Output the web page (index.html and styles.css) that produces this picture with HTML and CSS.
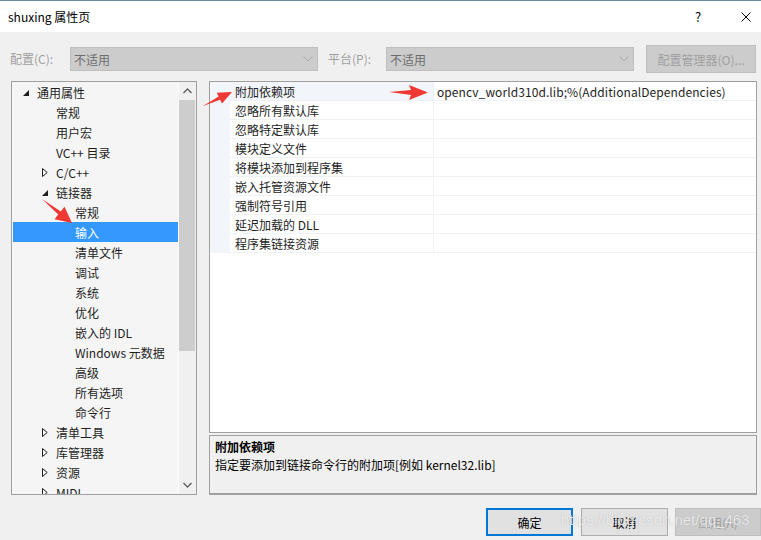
FILE: index.html
```html
<!DOCTYPE html>
<html lang="zh-CN">
<head>
<meta charset="utf-8">
<title>shuxing 属性页</title>
<link rel="stylesheet" href="styles.css">
</head>
<body>
<div class="titlebar">
  <span class="title">shuxing 属性页</span>
  <span class="help">?</span>
  <span class="close"><svg width="10" height="10" viewBox="0 0 10 10"><path d="M0.5 0.5L9.5 9.5M9.5 0.5L0.5 9.5" stroke="#000" stroke-width="1" fill="none"/></svg></span>
</div>

<div class="toolbar">
  <span class="lbl lbl-cfg">配置(C):</span>
  <div class="combo"><span>不适用</span><svg class="chev" width="10" height="6" viewBox="0 0 10 6"><path d="M0.5 0.5L5 5L9.5 0.5" stroke="#a8a8a8" fill="none"/></svg></div>
  <span class="lbl lbl-plat">平台(P):</span>
  <div class="combo"><span>不适用</span><svg class="chev" width="10" height="6" viewBox="0 0 10 6"><path d="M0.5 0.5L5 5L9.5 0.5" stroke="#a8a8a8" fill="none"/></svg></div>
  <div class="cfgbtn">配置管理器(O)...</div>
</div>

<div class="main">
  <div class="tree">
    <div class="tree-list">
      <div class="trow l0"><span class="tw"><svg width="6" height="6" viewBox="0 0 6 6"><path d="M6 0L6 6L0 6Z" fill="#1e1e1e"/></svg></span>通用属性</div>
      <div class="trow l1"><span class="tw"></span>常规</div>
      <div class="trow l1"><span class="tw"></span>用户宏</div>
      <div class="trow l1"><span class="tw"></span>VC++ 目录</div>
      <div class="trow l1"><span class="tw"><svg width="6" height="9" viewBox="0 0 6 9"><path d="M0.5 0.5L5.2 4.5L0.5 8.5Z" fill="none" stroke="#1e1e1e"/></svg></span>C/C++</div>
      <div class="trow l1"><span class="tw"><svg width="6" height="6" viewBox="0 0 6 6"><path d="M6 0L6 6L0 6Z" fill="#1e1e1e"/></svg></span>链接器</div>
      <div class="trow l2"><span class="tw"></span>常规</div>
      <div class="trow l2 sel"><span class="tw"></span>输入</div>
      <div class="trow l2"><span class="tw"></span>清单文件</div>
      <div class="trow l2"><span class="tw"></span>调试</div>
      <div class="trow l2"><span class="tw"></span>系统</div>
      <div class="trow l2"><span class="tw"></span>优化</div>
      <div class="trow l2"><span class="tw"></span>嵌入的 IDL</div>
      <div class="trow l2"><span class="tw"></span>Windows 元数据</div>
      <div class="trow l2"><span class="tw"></span>高级</div>
      <div class="trow l2"><span class="tw"></span>所有选项</div>
      <div class="trow l2"><span class="tw"></span>命令行</div>
      <div class="trow l1"><span class="tw"><svg width="6" height="9" viewBox="0 0 6 9"><path d="M0.5 0.5L5.2 4.5L0.5 8.5Z" fill="none" stroke="#1e1e1e"/></svg></span>清单工具</div>
      <div class="trow l1"><span class="tw"><svg width="6" height="9" viewBox="0 0 6 9"><path d="M0.5 0.5L5.2 4.5L0.5 8.5Z" fill="none" stroke="#1e1e1e"/></svg></span>库管理器</div>
      <div class="trow l1"><span class="tw"><svg width="6" height="9" viewBox="0 0 6 9"><path d="M0.5 0.5L5.2 4.5L0.5 8.5Z" fill="none" stroke="#1e1e1e"/></svg></span>资源</div>
      <div class="trow l1"><span class="tw"><svg width="6" height="9" viewBox="0 0 6 9"><path d="M0.5 0.5L5.2 4.5L0.5 8.5Z" fill="none" stroke="#1e1e1e"/></svg></span>MIDL</div>
    </div>
    <div class="vscroll">
      <div class="sbtn"><svg width="9" height="6" viewBox="0 0 9 6"><path d="M0.5 5L4.5 1L8.5 5" stroke="#606060" stroke-width="1.4" fill="none"/></svg></div>
      <div class="thumb"></div>
      <div class="track"></div>
      <div class="sbtn"><svg width="9" height="6" viewBox="0 0 9 6"><path d="M0.5 1L4.5 5L8.5 1" stroke="#606060" stroke-width="1.4" fill="none"/></svg></div>
    </div>
  </div>

  <div class="right">
    <div class="grid">
      <div class="prow first"><div class="gut"></div><div class="pname">附加依赖项</div><div class="pval">opencv_world310d.lib;%(AdditionalDependencies)</div></div>
      <div class="prow"><div class="gut"></div><div class="pname">忽略所有默认库</div><div class="pval"></div></div>
      <div class="prow"><div class="gut"></div><div class="pname">忽略特定默认库</div><div class="pval"></div></div>
      <div class="prow"><div class="gut"></div><div class="pname">模块定义文件</div><div class="pval"></div></div>
      <div class="prow"><div class="gut"></div><div class="pname">将模块添加到程序集</div><div class="pval"></div></div>
      <div class="prow"><div class="gut"></div><div class="pname">嵌入托管资源文件</div><div class="pval"></div></div>
      <div class="prow"><div class="gut"></div><div class="pname">强制符号引用</div><div class="pval"></div></div>
      <div class="prow"><div class="gut"></div><div class="pname">延迟加载的 DLL</div><div class="pval"></div></div>
      <div class="prow"><div class="gut"></div><div class="pname">程序集链接资源</div><div class="pval"></div></div>
    </div>
    <div class="desc">
      <div class="desc-title">附加依赖项</div>
      <div class="desc-text">指定要添加到链接命令行的附加项[例如 kernel32.lib]</div>
    </div>
  </div>
</div>

<div class="buttons">
  <div class="btn default">确定</div>
  <div class="btn">取消</div>
  <div class="btn disabled">应用(A)</div>
</div>

<div class="watermark">https://blog.csdn.net/qq_463</div>

<svg class="annot" width="761" height="540" viewBox="0 0 761 540">
  <polygon points="42,199 60.75,211.4 64.5,206.8 72,223 54.5,219.2 58.25,214.6" fill="#ef3734"/>
  <polygon points="203,106 218.6,96.5 216.8,92.7 232,92 222,103.5 220.2,99.7" fill="#ef3734"/>
  <polygon points="389,92 411,90 409,85 428,92.5 409,100 411,95" fill="#ef3734"/>
</svg>
</body>
</html>
```

FILE: styles.css
```css
* { box-sizing: border-box; }
html, body { margin: 0; padding: 0; }
body {
  width: 761px;
  height: 540px;
  overflow: hidden;
  position: relative;
  background: #f0f0f0;
  font-family: "Noto Sans CJK SC", "Noto Sans", sans-serif;
  font-size: 12px;
  color: #000;
}

.titlebar {
  height: 32px;
  background: #fff;
  border-top: 1px solid #6a88aa;
  display: flex;
  align-items: center;
  padding-left: 8px;
}
.title { flex: 1; font-size: 12px; color: #000; }
.help { width: 8px; margin-right: 38px; font-size: 13px; }
.close { width: 10px; height: 10px; margin-right: 10px; display: flex; }

.toolbar {
  height: 49px;
  display: flex;
  align-items: flex-start;
  padding: 13px 0 0 10px;
}
.lbl { color: #a0a0a0; line-height: 24px; margin-top: 2px; }
.lbl-cfg { width: 60px; }
.lbl-plat { width: 58px; margin-left: 10px; }
.combo {
  width: 248px;
  height: 24px;
  margin-top: 2px;
  background: #cccccc;
  border: 1px solid #bfbfbf;
  display: flex;
  align-items: center;
  justify-content: space-between;
  padding: 0 4px 0 3px;
  color: #6d6d6d;
}
.chev { display: block; }
.cfgbtn {
  width: 110px;
  height: 28px;
  margin-left: 12px;
  background: #cccccc;
  border: 1px solid #bfbfbf;
  color: #a0a0a0;
  display: flex;
  align-items: center;
  justify-content: center;
}

.main {
  display: flex;
  height: 414px;
  padding-left: 11px;
}
.tree {
  width: 186px;
  height: 414px;
  border: 1px solid #a0a0a0;
  background: #f5f5f5;
  display: flex;
}
.tree-list {
  width: 167px;
  overflow: hidden;
  padding-left: 1px;
  border-right: 1px solid #fbfbfb;
}
.trow {
  height: 20px;
  line-height: 20px;
  display: flex;
  align-items: center;
  white-space: nowrap;
  color: #1e1e1e;
  padding-top: 1px;
}
.trow.sel { background: #3399ff; color: #fff; }
.tw { width: 14px; height: 19px; display: flex; align-items: center; flex-shrink: 0; }
.l0 { padding-left: 10px; }
.l1 { padding-left: 29px; }
.l2 { padding-left: 48px; }
.l0 .tw svg { margin-top: 1px; }

.vscroll {
  width: 17px;
  background: #f0f0f0;
  display: flex;
  flex-direction: column;
}
.sbtn { height: 18px; display: flex; align-items: center; justify-content: center; }
.thumb { height: 251px; background: #cdcdcd; margin: 0 1px 0 0; }
.track { flex: 1; }

.right {
  margin-left: 12px;
  width: 548px;
  display: flex;
  flex-direction: column;
}
.grid {
  height: 352px;
  border: 1px solid #a0a0a0;
  background: #fff;
}
.prow { display: flex; height: 19px; }
.gut { width: 20px; background: #f2f5fa; }
.pname {
  width: 204px;
  padding-left: 5px;
  border-bottom: 1px solid #eef1f5;
  border-right: 1px solid #eef1f5;
  line-height: 19px;
  color: #1e1e1e;
  white-space: nowrap;
}
.prow.first .pname { background: #f2f5fa; }
.pval {
  flex: 1;
  padding-left: 3px;
  border-bottom: 1px solid #eef1f5;
  line-height: 19px;
  color: #1e1e1e;
  white-space: nowrap;
  letter-spacing: 0.08px;
}
.desc {
  margin-top: 2px;
  height: 60px;
  border: 1px solid #a0a0a0;
  border-bottom-width: 2px;
  padding: 2px 5px 0;
  background: #f0f0f0;
}
.desc-title { font-weight: bold; line-height: 18px; }
.desc-text { line-height: 18px; }

.buttons {
  display: flex;
  margin-top: 13px;
  padding-left: 486px;
}
.btn {
  width: 87px;
  height: 28px;
  border: 1px solid #adadad;
  background: #e1e1e1;
  display: flex;
  align-items: center;
  justify-content: center;
  margin-right: 8px;
}
.btn.default { border: 2px solid #0078d7; }
.btn.disabled {
  width: 86px;
  margin-right: 0;
  margin-left: -1px;
  background: #cccccc;
  border-color: #bfbfbf;
  color: #a0a0a0;
}

.watermark {
  position: absolute;
  left: 561px;
  top: 511px;
  font-family: "Liberation Sans", sans-serif;
  font-size: 15px;
  color: rgba(255, 255, 255, 0.75);
  text-shadow: 0 0 1px rgba(120, 120, 120, 0.5);
  white-space: nowrap;
  pointer-events: none;
}
.annot {
  position: absolute;
  left: 0;
  top: 0;
  pointer-events: none;
}
```
